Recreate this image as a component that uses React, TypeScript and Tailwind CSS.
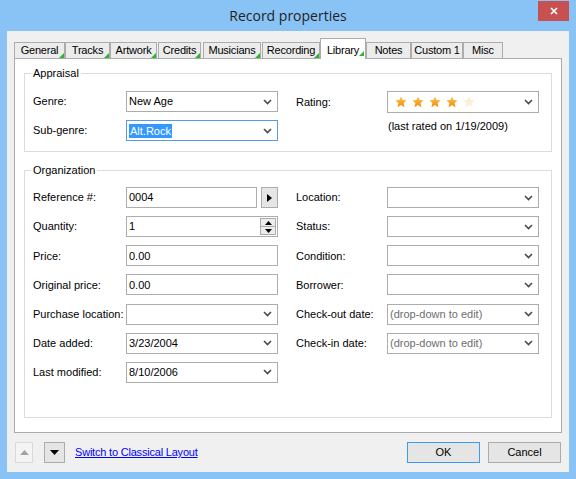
import React from "react";

type Tab = { label: string; cls: string; marked: boolean; selected?: boolean };

const tabs: Tab[] = [
  { label: "General", cls: "w-[51px]", marked: true },
  { label: "Tracks", cls: "w-[45px]", marked: true },
  { label: "Artwork", cls: "w-[47px]", marked: true },
  { label: "Credits", cls: "ml-[1px] w-[43px]", marked: true },
  { label: "Musicians", cls: "ml-[2px] w-[58px]", marked: true },
  { label: "Recording", cls: "ml-[1px] w-[58px]", marked: true },
  { label: "Library", cls: "w-[46px]", marked: true, selected: true },
  { label: "Notes", cls: "w-[45px]", marked: false },
  { label: "Custom 1", cls: "w-[52px]", marked: false },
  { label: "Misc", cls: "w-[40px]", marked: false },
];

function Chevron() {
  return (
    <svg width="9" height="6" viewBox="0 0 9 6" className="shrink-0">
      <path d="M1 1l3.5 3.5L8 1" fill="none" stroke="#4a4a4a" strokeWidth="1.6" />
    </svg>
  );
}

function Star({ pale }: { pale?: boolean }) {
  return (
    <svg width="12" height="12" viewBox="0 0 12 12">
      <polygon
        points="6,0.4 7.6,4.1 11.6,4.4 8.6,7.1 9.5,11.3 6,9.1 2.5,11.3 3.4,7.1 0.4,4.4 4.4,4.1"
        fill={pale ? "url(#starPale)" : "url(#starGold)"}
        strokeLinejoin="round"
      />
    </svg>
  );
}

function Combo({
  children,
  focused,
  className = "h-[21px]",
}: {
  children?: React.ReactNode;
  focused?: boolean;
  className?: string;
}) {
  return (
    <div
      className={`flex w-[152px] items-center border bg-white pl-[2px] pr-[5px] ${className} ${
        focused ? "border-[#569de5]" : "border-[#acacac]"
      }`}
    >
      <div className="flex flex-1 items-center truncate">{children}</div>
      <Chevron />
    </div>
  );
}

function TextBox({ value, className = "w-[152px]" }: { value?: string; className?: string }) {
  return (
    <div className={`flex h-[21px] items-center border border-[#abadb3] bg-white pl-[2px] ${className}`}>
      {value}
    </div>
  );
}

function Row({ label, wide, children }: { label: string; wide?: boolean; children: React.ReactNode }) {
  return (
    <div className="flex h-[21px] items-center">
      <div className={wide ? "w-[93px]" : "w-[91px]"}>{label}</div>
      {children}
    </div>
  );
}

function Hint() {
  return <span className="text-[#6d6d6d]">(drop-down to edit)</span>;
}

export default function App() {
  return (
    <div className="flex h-[479px] w-[576px] flex-col bg-[#89c3f5] font-['Liberation_Sans',Arial,sans-serif] text-[11px] text-black">
      <svg width="0" height="0" className="absolute">
        <defs>
          <linearGradient id="starGold" x1="0" y1="0" x2="0" y2="1">
            <stop offset="0" stopColor="#ffc54d" />
            <stop offset="1" stopColor="#f28a05" />
          </linearGradient>
          <linearGradient id="starPale" x1="0" y1="0" x2="0" y2="1">
            <stop offset="0" stopColor="#fde7c6" />
            <stop offset="1" stopColor="#fff3e2" />
          </linearGradient>
        </defs>
      </svg>

      {/* title bar */}
      <div className="relative flex h-[31px] items-center justify-center">
        <span className="font-['Open_Sans',sans-serif] text-[14px] leading-none text-[#1f1f1f]">
          Record properties
        </span>
        <div className="absolute right-[7px] top-px flex h-[20px] w-[31px] items-center justify-center bg-[#c75050]">
          <svg width="8" height="8" viewBox="0 0 8 8">
            <path d="M1 1l6 6M7 1L1 7" stroke="#fff" strokeWidth="1.7" />
          </svg>
        </div>
      </div>

      {/* client */}
      <div className="mx-[7px] mb-[7px] flex flex-1 flex-col bg-[#f0f0f0]">
        {/* tabs */}
        <div className="relative z-10 -mb-px flex h-[28px] items-end pl-[7px] tracking-[-0.2px]">
          {tabs.map((t) =>
            t.selected ? (
              <div
                key={t.label}
                className={`relative flex h-[21px] items-start justify-center border-x border-t border-[#acacac] bg-white pt-[3px] ${t.cls}`}
              >
                {t.label}
                <svg width="5" height="5" className="absolute bottom-[3px] right-[1px]">
                  <polygon points="5,0 5,5 0,5" fill="#2db52d" />
                </svg>
              </div>
            ) : (
              <div
                key={t.label}
                className={`relative flex h-[17px] items-center justify-center border border-[#acacac] bg-[#ececec] ${t.cls}`}
              >
                {t.label}
                {t.marked && (
                  <svg width="5" height="5" className="absolute bottom-0 right-0">
                    <polygon points="5,0 5,5 0,5" fill="#2db52d" />
                  </svg>
                )}
              </div>
            )
          )}
        </div>

        {/* tab page */}
        <div className="mx-[7px] flex h-[375px] flex-col border border-[#acacac] bg-white px-[9px] pb-[14px]">
          <fieldset className="mt-[8px] border border-[#dcdcdc] px-[8px] pb-[10px] pt-[11px]">
            <legend className="-ml-[2px] px-[2px] leading-[13px]">Appraisal</legend>
            <div className="flex">
              <div className="flex flex-col gap-[8px]">
                <Row label="Genre:" wide>
                  <Combo>New Age</Combo>
                </Row>
                <Row label="Sub-genre:" wide>
                  <Combo focused>
                    <span className="bg-[#3399ff] px-px leading-[14px] text-white">Alt.Rock</span>
                  </Combo>
                </Row>
              </div>
              <div className="ml-[18px] flex">
                <div className="flex h-[22px] w-[91px] items-center">Rating:</div>
                <div className="flex flex-col">
                  <Combo className="h-[22px]">
                    <div className="flex items-center gap-[5px] pl-[5px]">
                      <Star />
                      <Star />
                      <Star />
                      <Star />
                      <Star pale />
                    </div>
                  </Combo>
                  <div className="mt-[7px] pl-px leading-[13px]">(last rated on 1/19/2009)</div>
                </div>
              </div>
            </div>
          </fieldset>

          <fieldset className="mt-[12px] flex-1 border border-[#dcdcdc] px-[8px] pt-[10px]">
            <legend className="-ml-[2px] px-[2px] leading-[13px]">Organization</legend>
            <div className="flex">
              <div className="flex flex-col gap-[8.17px]">
                <Row label="Reference #:" wide>
                  <TextBox value="0004" className="w-[131px]" />
                  <div className="ml-[4px] flex h-[21px] w-[17px] items-center justify-center border border-[#acacac] bg-[#e6e6e6]">
                    <svg width="5" height="8" viewBox="0 0 5 8">
                      <polygon points="0,0 5,4 0,8" fill="#000" />
                    </svg>
                  </div>
                </Row>
                <Row label="Quantity:" wide>
                  <div className="flex h-[21px] w-[152px] items-center border border-[#abadb3] bg-white pl-[2px]">
                    <span className="flex-1">1</span>
                    <div className="mr-px flex h-[17px] w-[16px] flex-col border border-[#acacac] bg-[#ececec]">
                      <div className="flex flex-1 items-center justify-center border-b border-[#acacac]">
                        <svg width="7" height="4" viewBox="0 0 7 4">
                          <polygon points="0,4 3.5,0 7,4" fill="#000" />
                        </svg>
                      </div>
                      <div className="flex flex-1 items-center justify-center">
                        <svg width="7" height="4" viewBox="0 0 7 4">
                          <polygon points="0,0 7,0 3.5,4" fill="#000" />
                        </svg>
                      </div>
                    </div>
                  </div>
                </Row>
                <Row label="Price:" wide>
                  <TextBox value="0.00" />
                </Row>
                <Row label="Original price:" wide>
                  <TextBox value="0.00" />
                </Row>
                <Row label="Purchase location:" wide>
                  <Combo />
                </Row>
                <Row label="Date added:" wide>
                  <Combo>3/23/2004</Combo>
                </Row>
                <Row label="Last modified:" wide>
                  <Combo>8/10/2006</Combo>
                </Row>
              </div>
              <div className="ml-[18px] flex flex-col gap-[8.17px]">
                <Row label="Location:">
                  <Combo />
                </Row>
                <Row label="Status:">
                  <Combo />
                </Row>
                <Row label="Condition:">
                  <Combo />
                </Row>
                <Row label="Borrower:">
                  <Combo />
                </Row>
                <Row label="Check-out date:">
                  <Combo>
                    <Hint />
                  </Combo>
                </Row>
                <Row label="Check-in date:">
                  <Combo>
                    <Hint />
                  </Combo>
                </Row>
              </div>
            </div>
          </fieldset>
        </div>

        {/* bottom bar */}
        <div className="flex h-[39px] items-center px-[8px]">
          <div className="flex h-[21px] w-[18px] items-center justify-center border border-[#d9d9d9] bg-[#f4f4f4]">
            <svg width="9" height="5" viewBox="0 0 9 5">
              <polygon points="0,5 4.5,0 9,5" fill="#a3a3a3" />
            </svg>
          </div>
          <div className="ml-[11px] flex h-[21px] w-[21px] items-center justify-center border border-[#acacac] bg-[#e5e5e5]">
            <svg width="9" height="5" viewBox="0 0 9 5">
              <polygon points="0,0 9,0 4.5,5" fill="#000" />
            </svg>
          </div>
          <a className="ml-[10px] tracking-[-0.2px] text-[#0000ff] underline" href="#">
            Switch to Classical Layout
          </a>
          <div className="ml-auto flex h-[21px] w-[73px] items-center justify-center border border-[#3c9bf0] bg-[#e5e5e5]">
            OK
          </div>
          <div className="ml-[8px] flex h-[21px] w-[73px] items-center justify-center border border-[#acacac] bg-[#e5e5e5]">
            Cancel
          </div>
        </div>
      </div>
    </div>
  );
}
